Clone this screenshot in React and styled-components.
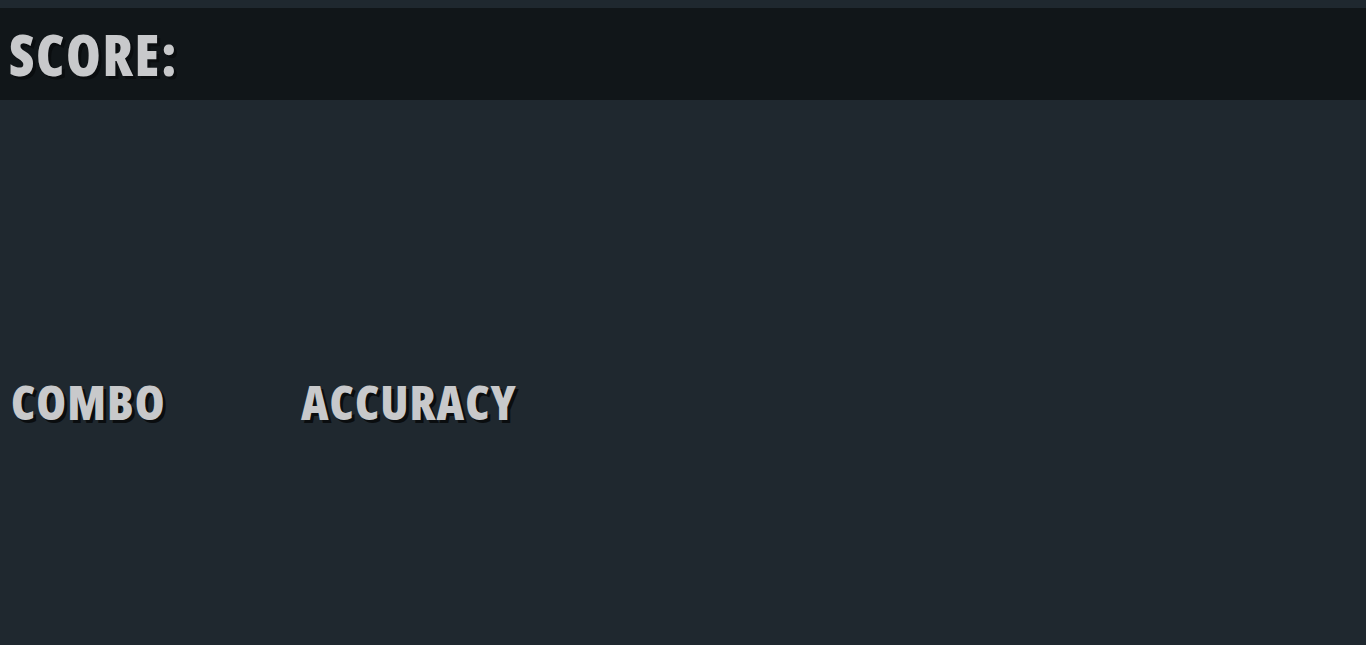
import React from 'react';
import styled, { createGlobalStyle } from 'styled-components';

const GlobalStyle = createGlobalStyle`
  html, body {
    margin: 0;
    padding: 0;
    background: #1f282f;
    height: 100%;
  }
  body {
    font-family: "Open Sans", Lato, sans-serif;
    overflow: hidden;
  }
`;

const Screen = styled.div`
  width: 1366px;
  height: 645px;
  display: flex;
  flex-direction: column;
  background: #1f282f;
`;

const ScoreBar = styled.header`
  margin-top: 8px;
  height: 92px;
  background: #111619;
  display: flex;
  align-items: center;
  padding-left: 9px;
`;

const Label = styled.span`
  color: #c8c9cb;
  font-weight: 800;
  font-size: ${(p) => p.size}px;
  font-stretch: condensed;
  letter-spacing: ${(p) => p.spacing}px;
  text-shadow: 3px 3px 0 #0a0d0f;
  line-height: 1;
`;

const Stats = styled.div`
  margin-top: 278px;
  display: grid;
  grid-template-columns: 290px 290px;
  padding-left: 11px;
`;

const App = () => (
  <>
    <GlobalStyle />
    <Screen>
      <ScoreBar>
        <Label size={56} spacing={1.6}>SCORE:</Label>
      </ScoreBar>
      <Stats>
        <Label size={48} spacing={1}>COMBO</Label>
        <Label size={48} spacing={1}>ACCURACY</Label>
      </Stats>
    </Screen>
  </>
);

export default App;
